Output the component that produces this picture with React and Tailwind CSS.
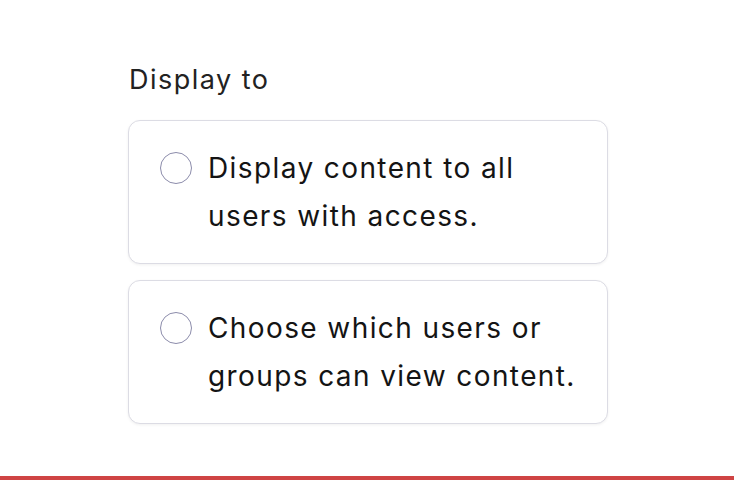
export default function App() {
  const options = [
    "Display content to all users with access.",
    "Choose which users or groups can view content.",
  ];
  return (
    <div className="relative w-[734px] h-[480px] bg-white overflow-hidden" style={{ fontFamily: "Inter, 'Noto Sans', sans-serif" }}>
      <div className="pl-[128px] pt-[62px] w-[608px]">
        <div className="text-[27px] leading-[36px] tracking-[0.055em] text-[#222222] mb-[22px] pl-[1px]">Display to</div>
        <div className="flex flex-col gap-[16px]">
          {options.map((t) => (
            <div key={t} className="flex items-start gap-[16px] rounded-[12px] border border-[#dcdce4] bg-white px-[31px] py-[23px] shadow-[0_1px_3px_rgba(0,0,0,0.06)]">
              <div className="mt-[8px] w-[32px] h-[32px] shrink-0 rounded-full border border-[#8c8cab] bg-white" />
              <div className="text-[28px] leading-[48px] tracking-[0.05em] text-[#141414]">{t}</div>
            </div>
          ))}
        </div>
      </div>
      <div className="absolute left-0 right-0 bottom-0 h-[4px] bg-[#cf4444]" />
    </div>
  );
}
